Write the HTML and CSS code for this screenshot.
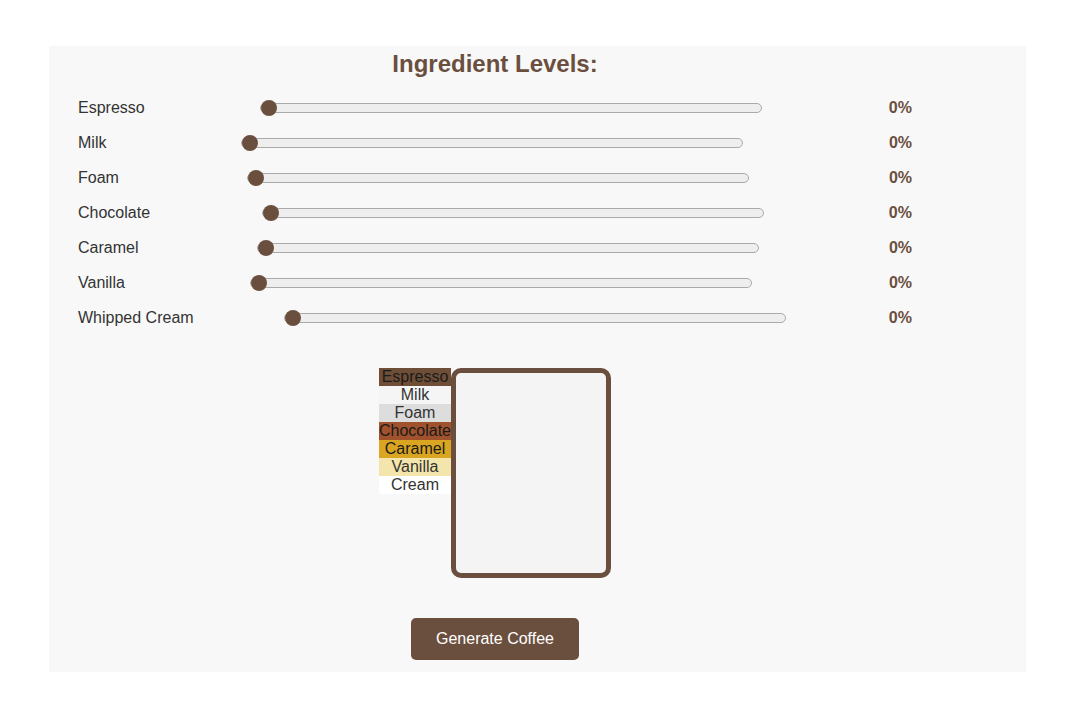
FILE: index.html
```html
<!DOCTYPE html>
<html lang="en">
<head>
<meta charset="utf-8">
<title>Coffee Generator</title>
<link rel="stylesheet" href="styles.css">
</head>
<body>
<div class="container">
  <div class="panel">
    <h2 class="title">Ingredient Levels:</h2>
    <div class="rows">
      <div class="row"><label class="label">Espresso</label><input class="slider" type="range" min="0" max="100" value="0"><span class="value">0%</span></div>
      <div class="row"><label class="label">Milk</label><input class="slider" type="range" min="0" max="100" value="0"><span class="value">0%</span></div>
      <div class="row"><label class="label">Foam</label><input class="slider" type="range" min="0" max="100" value="0"><span class="value">0%</span></div>
      <div class="row"><label class="label">Chocolate</label><input class="slider" type="range" min="0" max="100" value="0"><span class="value">0%</span></div>
      <div class="row"><label class="label">Caramel</label><input class="slider" type="range" min="0" max="100" value="0"><span class="value">0%</span></div>
      <div class="row"><label class="label">Vanilla</label><input class="slider" type="range" min="0" max="100" value="0"><span class="value">0%</span></div>
      <div class="row"><label class="label">Whipped Cream</label><input class="slider" type="range" min="0" max="100" value="0"><span class="value">0%</span></div>
    </div>
    <div class="visual">
      <div class="legend">
        <div class="key key-espresso">Espresso</div>
        <div class="key key-milk">Milk</div>
        <div class="key key-foam">Foam</div>
        <div class="key key-chocolate">Chocolate</div>
        <div class="key key-caramel">Caramel</div>
        <div class="key key-vanilla">Vanilla</div>
        <div class="key key-cream">Cream</div>
      </div>
      <div class="cup"></div>
    </div>
    <div class="actions">
      <button class="btn" type="button">Generate Coffee</button>
    </div>
  </div>
</div>
</body>
</html>
```

FILE: styles.css
```css
html, body {
  margin: 0;
  padding: 0;
  background: #ffffff;
  font-family: "Liberation Sans", Arial, sans-serif;
}

.container {
  margin: 46px 0 0 49px;
  width: 977px;
  background: #f8f8f8;
  padding: 4px 0 12px 0;
  box-sizing: border-box;
}

.panel {
  margin-left: 29px;
  width: 834px;
}

.title {
  margin: 0;
  font-size: 24px;
  font-weight: bold;
  line-height: normal;
  color: #6b4f3e;
  text-align: center;
}

.rows {
  margin-top: 12px;
}

.row {
  display: flex;
  align-items: center;
  justify-content: space-between;
  height: 35px;
}

.label {
  font-size: 16px;
  color: #333333;
}

.slider {
  -webkit-appearance: none;
  appearance: none;
  width: 500px;
  height: 8px;
  margin: 0 12px 0 0;
  padding: 0;
  background: #eeeeee;
  border: 1px solid #aaaaaa;
  border-radius: 5px;
  outline: none;
}

.slider::-webkit-slider-thumb {
  -webkit-appearance: none;
  appearance: none;
  width: 16px;
  height: 16px;
  border-radius: 50%;
  background: #6b4f3e;
  border: none;
  cursor: pointer;
}

.value {
  font-size: 16px;
  font-weight: bold;
  color: #6b4f3e;
}

.visual {
  display: flex;
  justify-content: center;
  align-items: flex-start;
  margin-top: 33px;
}

.legend {
  display: flex;
  flex-direction: column;
}

.key {
  font-size: 16px;
  line-height: 18px;
  color: #333333;
  text-align: center;
}

.key-espresso { background: #6f4e37; color: #1a1a1a; }
.key-milk { background: #f5f5f5; }
.key-foam { background: #dddddd; }
.key-chocolate { background: #a0522d; color: #1a1a1a; }
.key-caramel { background: #daa520; color: #1a1a1a; }
.key-vanilla { background: #f3e5ab; }
.key-cream { background: #ffffff; }

.cup {
  width: 150px;
  height: 200px;
  border: 5px solid #6b4f3e;
  border-radius: 10px;
  background: #f4f4f4;
}

.actions {
  display: flex;
  justify-content: center;
  margin-top: 40px;
}

.btn {
  font-family: "Liberation Sans", Arial, sans-serif;
  font-size: 16px;
  color: #ffffff;
  background: #6b4f3e;
  border: none;
  border-radius: 5px;
  padding: 12px 25px;
  line-height: 18px;
  cursor: pointer;
}
```
